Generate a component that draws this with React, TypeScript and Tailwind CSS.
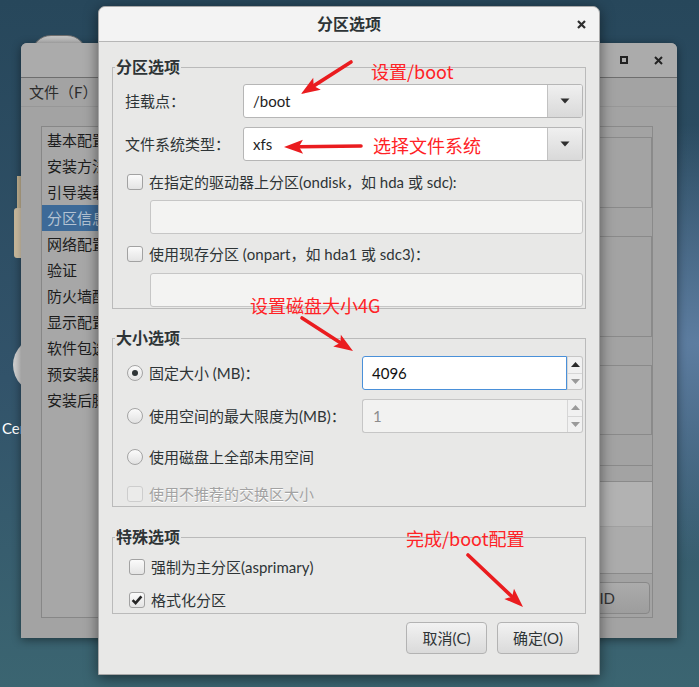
import React from "react";

const SIDEBAR = [
  "基本配置",
  "安装方法",
  "引导装载程序选项",
  "分区信息",
  "网络配置",
  "验证",
  "防火墙配置",
  "显示配置",
  "软件包选择",
  "预安装脚本",
  "安装后脚本",
];

function CheckBox({ checked, disabled }: { checked?: boolean; disabled?: boolean }) {
  return (
    <span
      className={
        disabled
          ? "flex h-4 w-4 shrink-0 items-center justify-center rounded-[3px] border border-[#cdcdcd] bg-[#ebebea]"
          : "flex h-4 w-4 shrink-0 items-center justify-center rounded-[3px] border border-[#a2a2a2] bg-gradient-to-b from-[#fbfbfb] to-[#e4e4e4]"
      }
    >
      {checked && (
        <svg width="12" height="12" viewBox="0 0 12 12">
          <path d="M1.6 6.2 L4.6 9.2 L10.4 2.4" fill="none" stroke="#262626" strokeWidth="2.6" />
        </svg>
      )}
    </span>
  );
}

function Radio({ selected }: { selected?: boolean }) {
  return (
    <span className="flex h-4 w-4 shrink-0 items-center justify-center rounded-full border border-[#a4a4a4] bg-gradient-to-b from-[#fbfbfb] to-[#e2e2e2]">
      {selected && <span className="h-[6px] w-[6px] rounded-full bg-[#2e3436]" />}
    </span>
  );
}

function Combo({ value }: { value: string }) {
  return (
    <div className="flex h-[34px] flex-1 overflow-hidden rounded-[3px] border border-[#b6b6b6] bg-white">
      <div className="flex flex-1 items-center pl-[9px] text-[15px] text-[#1e1e1e]">{value}</div>
      <div className="flex w-[35px] items-center justify-center border-l border-[#c2c2c2] bg-gradient-to-b from-[#f0f0f0] to-[#d9d9d9]">
        <svg width="10" height="6" viewBox="0 0 10 6">
          <path d="M0.5 0.5 H9.5 L5 5.5 Z" fill="#2e2e2e" />
        </svg>
      </div>
    </div>
  );
}

function Spin({ value, focused }: { value: string; focused?: boolean }) {
  return (
    <div className="flex h-[34px] w-[221px]">
      <div
        className={
          focused
            ? "flex flex-1 items-center rounded-l-[3px] border border-[#4a90d9] bg-white pl-[9px] text-[15px] text-[#111]"
            : "flex flex-1 items-center rounded-l-[3px] border border-r-0 border-[#c6c6c6] bg-[#f2f2f1] pl-[10px] text-[15px] text-[#8c8c8c]"
        }
      >
        {value}
      </div>
      <div className="flex w-[16px] flex-col rounded-r-[3px] border border-l-0 border-[#c6c6c6] bg-[#f1f1f1]">
        <div className="flex flex-1 items-center justify-center border-b border-l border-[#d6d6d6]">
          <svg width="9" height="5" viewBox="0 0 9 5">
            <path d="M0 5 H9 L4.5 0 Z" fill={focused ? "#2a2a2a" : "#9a9a9a"} />
          </svg>
        </div>
        <div className="flex flex-1 items-center justify-center border-l border-[#d6d6d6]">
          <svg width="9" height="5" viewBox="0 0 9 5">
            <path d="M0 0 H9 L4.5 5 Z" fill="#9a9a9a" />
          </svg>
        </div>
      </div>
    </div>
  );
}

function Arrow({ x1, y1, x2, y2 }: { x1: number; y1: number; x2: number; y2: number }) {
  const dx = x2 - x1;
  const dy = y2 - y1;
  const len = Math.hypot(dx, dy);
  const ux = dx / len;
  const uy = dy / len;
  const head = 19;
  const half = 7;
  const bx = x2 - ux * head;
  const by = y2 - uy * head;
  const px = -uy * half;
  const py = ux * half;
  return (
    <g>
      <line x1={x1} y1={y1} x2={bx + ux * 3} y2={by + uy * 3} stroke="#ea1c1f" strokeWidth={3.6} strokeLinecap="round" />
      <polygon points={`${x2},${y2} ${bx + px},${by + py} ${bx + ux * 4},${by + uy * 4} ${bx - px},${by - py}`} fill="#ea1c1f" />
    </g>
  );
}

function BackWindow() {
  return (
    <div className="absolute left-[21px] top-[43px] flex h-[595px] w-[656px] flex-col rounded-t-[6px] bg-[#a3a3a3] shadow-[0_2px_10px_rgba(0,0,0,0.45)]">
      {/* title bar */}
      <div className="flex h-[35px] items-center justify-end gap-[26px] rounded-t-[6px] border-b border-[#6e6e6e] bg-[#ababab] pr-[14px]">
        <span className="h-[8px] w-[8px] border-2 border-[#222]" />
        <svg width="9" height="9" viewBox="0 0 9 9">
          <path d="M1 1 L8 8 M8 1 L1 8" stroke="#222" strokeWidth="2" />
        </svg>
      </div>
      {/* menu */}
      <div className="flex h-[29px] items-center border-b border-[#979797] pl-[8px] text-[15px] text-[#2c2c2c]">文件（F）</div>
      <div className="flex flex-1 pb-[20px] pl-[20px] pr-[24px] pt-[19px]">
        <div className="flex w-[180px] flex-col border border-[#878787] bg-[#a7a7a7]">
          {SIDEBAR.map((s) => (
            <div
              key={s}
              className={
                s === "分区信息"
                  ? "flex h-[26px] items-center whitespace-nowrap bg-[#3d6a98] pl-[5px] text-[15px] text-[#b4c3d3]"
                  : "flex h-[26px] items-center whitespace-nowrap pl-[5px] text-[15px] text-[#1c1c1c]"
              }
            >
              {s}
            </div>
          ))}
        </div>
        <div className="ml-auto flex w-[100px] flex-col border border-[#8a8a8a]">
          <div className="h-[10px]" />
          <div className="h-[71px] border-y border-r border-[#8a8a8a]" />
          <div className="h-[28px]" />
          <div className="h-[101px] border-y border-r border-[#8a8a8a]" />
          <div className="h-[28px]" />
          <div className="h-[70px] border-y border-r border-[#8a8a8a]" />
          <div className="h-[31px] border-b border-[#8a8a8a]" />
          <div className="h-[16px] border-b border-[#8a8a8a]" />
          <div className="h-[45px] border-b border-[#a0a0a0] bg-[#b2b2b2]" />
          <div className="h-[47px] border-b border-[#8a8a8a] bg-[#ababab]" />
          <div className="h-[8px]" />
          <div className="mr-[2px] flex h-[32px] items-center justify-end rounded-[4px] border border-[#888] bg-gradient-to-b from-[#ababab] to-[#9d9d9d] pr-[34px] text-[15px] text-[#333]">
            RAID
          </div>
        </div>
      </div>
    </div>
  );
}

function PartitionDialog() {
  return (
    <div className="absolute left-[98px] top-[6px] flex h-[669px] w-[502px] flex-col rounded-t-[7px] border border-[#a8a8a8] bg-[#e8e8e7] shadow-[0_3px_14px_rgba(0,0,0,0.5)]">
      {/* header */}
      <div className="grid h-[35px] grid-cols-[1fr_auto_1fr] items-center rounded-t-[7px] border-b border-[#b6b6b6] bg-[#f3f3f3]">
        <span />
        <span className="text-[16px] font-bold text-[#2e3436]">分区选项</span>
        <span className="flex justify-end pr-[13px]">
          <svg width="9" height="9" viewBox="0 0 9 9">
            <path d="M1 1 L8 8 M8 1 L1 8" stroke="#2e2e2e" strokeWidth="2.2" />
          </svg>
        </span>
      </div>

      <div className="flex flex-col px-[13px] pt-[16px] text-[15px] text-[#2e3436]">
        {/* 分区选项 */}
        <fieldset className="border border-[#bababa]">
          <legend className="ml-[2px] px-[1px] text-[16px] font-bold leading-[18px]">分区选项</legend>
          <div className="flex flex-col pb-[1px] pl-[12px] pr-[2px]">
            <div className="mt-[8px] flex items-center">
              <span className="w-[118px]">挂载点：</span>
              <Combo value="/boot" />
            </div>
            <div className="mt-[9px] flex items-center">
              <span className="w-[118px]">文件系统类型：</span>
              <Combo value="xfs" />
            </div>
            <div className="mt-[10px] flex h-[22px] items-center gap-[6px] pl-[2px]">
              <CheckBox />
              <span>在指定的驱动器上分区(ondisk，如 hda 或 sdc):</span>
            </div>
            <div className="ml-[25px] mt-[7px] h-[34px] rounded-[3px] border border-[#c6c6c6] bg-[#f3f3f2]" />
            <div className="mt-[9px] flex h-[22px] items-center gap-[6px] pl-[2px]">
              <CheckBox />
              <span>使用现存分区 (onpart，如 hda1 或 sdc3)：</span>
            </div>
            <div className="ml-[25px] mt-[8px] h-[34px] rounded-[3px] border border-[#c6c6c6] bg-[#f3f3f2]" />
          </div>
        </fieldset>

        {/* 大小选项 */}
        <fieldset className="mt-[20px] border border-[#bababa]">
          <legend className="ml-[2px] px-[1px] text-[16px] font-bold leading-[18px]">大小选项</legend>
          <div className="flex flex-col pb-[1px] pl-[14px] pr-[2px]">
            <div className="mt-[9px] flex items-center">
              <div className="flex flex-1 items-center gap-[6px]">
                <Radio selected />
                <span>固定大小 (MB)：</span>
              </div>
              <Spin value="4096" focused />
            </div>
            <div className="mt-[9px] flex items-center">
              <div className="flex flex-1 items-center gap-[6px]">
                <Radio />
                <span>使用空间的最大限度为(MB)：</span>
              </div>
              <Spin value="1" />
            </div>
            <div className="mt-[13px] flex h-[22px] items-center gap-[6px]">
              <Radio />
              <span>使用磁盘上全部未用空间</span>
            </div>
            <div className="mt-[15px] flex h-[22px] items-center gap-[6px]">
              <CheckBox disabled />
              <span className="text-[#a2a2a2] [text-shadow:0_1px_0_#ffffff]">使用不推荐的交换区大小</span>
            </div>
          </div>
        </fieldset>

        {/* 特殊选项 */}
        <fieldset className="mt-[21px] border border-[#bababa]">
          <legend className="ml-[2px] px-[1px] text-[16px] font-bold leading-[18px]">特殊选项</legend>
          <div className="flex flex-col pb-[2px] pl-[16px] pr-[2px]">
            <div className="mt-[10px] flex h-[22px] items-center gap-[6px]">
              <CheckBox />
              <span>强制为主分区(asprimary)</span>
            </div>
            <div className="mt-[11px] flex h-[22px] items-center gap-[6px]">
              <CheckBox checked />
              <span>格式化分区</span>
            </div>
          </div>
        </fieldset>

        <div className="mt-[8px] flex justify-end gap-[10px] pr-[7px]">
          <button className="h-[32px] w-[81px] rounded-[4px] border border-[#b3b3b3] bg-gradient-to-b from-[#f2f2f2] to-[#dadada] text-[15px] text-[#2e3436]">
            取消(C)
          </button>
          <button className="h-[32px] w-[82px] rounded-[4px] border border-[#b3b3b3] bg-gradient-to-b from-[#f2f2f2] to-[#dadada] text-[15px] text-[#2e3436]">
            确定(O)
          </button>
        </div>
      </div>
    </div>
  );
}

export default function App() {
  return (
    <div className="relative h-[687px] w-[699px] overflow-hidden bg-[radial-gradient(ellipse_at_100%_50%,#5d7da0_0%,rgba(93,125,160,0)_45%),linear-gradient(180deg,#27475b_0%,#32536a_55%,#3b6571_100%)] font-['Lato','Noto_Sans_CJK_SC',sans-serif]">
      {/* desktop icons, mostly hidden */}
      <div className="absolute left-[31px] top-[35px] h-[40px] w-[56px] rounded-full border border-[#6f6f6f] bg-gradient-to-b from-[#c4c4c4] to-[#7e7e7e]" />
      <div className="absolute left-[17px] top-[176px] h-[33px] w-[6px] bg-[#c4b493]" />
      <div className="absolute left-[14px] top-[208px] h-[50px] w-[10px] rounded-l-[3px] bg-gradient-to-r from-[#c9b89a] to-[#e6d9c0]" />
      <div className="absolute left-[13px] top-[337px] h-[56px] w-[56px] rounded-full bg-gradient-to-r from-[#cfcfcf] to-[#f4f4f4]" />
      <div className="absolute left-[2px] top-[417px] text-[15px] text-white">CentOS</div>

      <BackWindow />
      <PartitionDialog />

      {/* annotations */}
      <svg className="pointer-events-none absolute left-0 top-0" width="699" height="687">
        <Arrow x1={351} y1={62} x2={301} y2={94} />
        <Arrow x1={361} y1={146} x2={284} y2={147} />
        <Arrow x1={302} y1={318} x2={353} y2={351} />
        <Arrow x1={468} y1={555} x2={523} y2={607} />
      </svg>
      <span className="absolute left-[371px] top-[59px] font-['Noto_Sans_CJK_SC',sans-serif] text-[18px] leading-[24px] text-[#ff2226]">设置/boot</span>
      <span className="absolute left-[373px] top-[133px] font-['Noto_Sans_CJK_SC',sans-serif] text-[18px] leading-[24px] text-[#ff2226]">选择文件系统</span>
      <span className="absolute left-[250px] top-[293px] font-['Noto_Sans_CJK_SC',sans-serif] text-[18px] leading-[24px] text-[#ff2226]">设置磁盘大小4G</span>
      <span className="absolute left-[406px] top-[526px] font-['Noto_Sans_CJK_SC',sans-serif] text-[18px] leading-[24px] text-[#ff2226]">完成/boot配置</span>
    </div>
  );
}
